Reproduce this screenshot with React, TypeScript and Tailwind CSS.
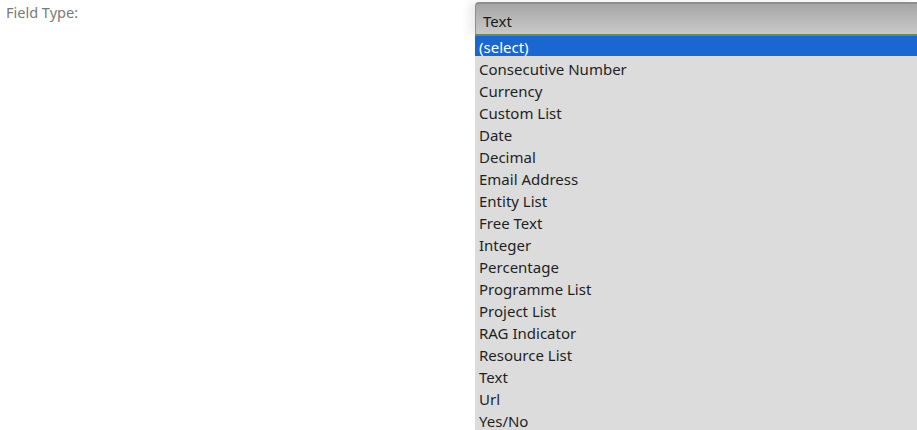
const OPTIONS = [
  '(select)',
  'Consecutive Number',
  'Currency',
  'Custom List',
  'Date',
  'Decimal',
  'Email Address',
  'Entity List',
  'Free Text',
  'Integer',
  'Percentage',
  'Programme List',
  'Project List',
  'RAG Indicator',
  'Resource List',
  'Text',
  'Url',
  'Yes/No',
];

export default function App() {
  return (
    <div
      className="w-[917px] h-[430px] overflow-hidden bg-white flex"
      style={{ fontFamily: '"Noto Sans", "Open Sans", sans-serif' }}
    >
      <div className="w-[475px] shrink-0 pl-[6px] pt-[2px] text-[14.5px] text-[#7a7a7a]">Field Type:</div>

      <div className="flex-1 flex flex-col pt-[2px]">
        {/* select box */}
        <div className="h-[33px] rounded-tl-[4px] border-t-2 border-l border-[#8e8e8e] bg-gradient-to-b from-[#a6a6a6] to-[#c9c9c9] shadow-[-6px_0_8px_rgba(0,0,0,0.08)] flex items-center pl-[7px] pt-[4px] text-[15px] text-[#1a1a1a]">
          Text
        </div>
        <div className="h-[2px] bg-[#6b8a58]" />

        {/* dropdown list */}
        <div className="flex-1 bg-[#dcdcdc]">
          {OPTIONS.map((o, i) => (
            <div
              key={o}
              className={`flex items-center pl-[4px] text-[15px] ${
                i === 0 ? 'bg-[#1a67d2] text-white h-[20px] pt-[3px]' : 'h-[22px] pt-[4px] text-[#1f1f1f]'
              }`}
            >
              {o}
            </div>
          ))}
        </div>
      </div>
    </div>
  );
}
